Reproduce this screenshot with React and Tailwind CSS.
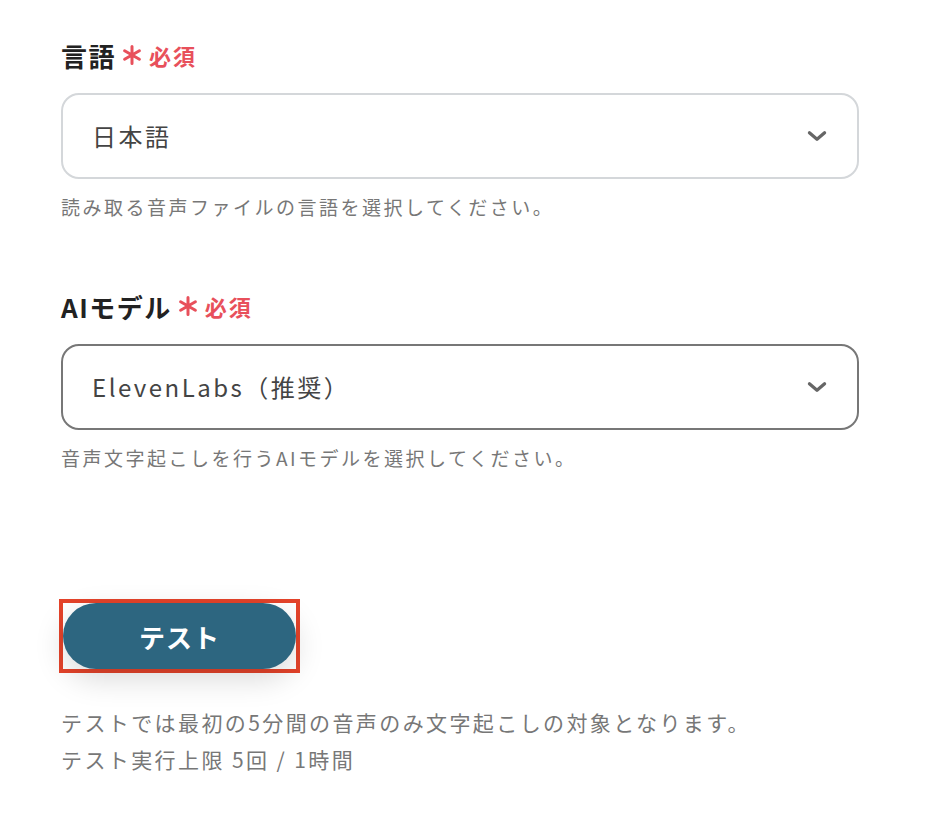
import React from "react";

function Chevron() {
  return (
    <svg width="26" height="26" viewBox="0 0 24 24" fill="none" stroke="#666" strokeWidth="3" strokeLinecap="round" strokeLinejoin="round">
      <path d="M5 9l7 6 7-6" />
    </svg>
  );
}

function Star() {
  return (
    <svg width="20" height="20" viewBox="0 0 20 20" stroke="#e8505b" strokeWidth="3" strokeLinecap="round">
      <path d="M10 1.5v17M2.6 5.75l14.8 8.5M17.4 5.75l-14.8 8.5" />
    </svg>
  );
}

function Field({ label, value, help, dark }) {
  return (
    <div className="flex flex-col">
      <div className="flex items-center h-[36px]">
        <span className="text-[26px] font-bold text-[#222] tracking-[1.5px]">{label}</span>
        <span className="ml-[6px] mr-[7px] flex items-center"><Star /></span>
        <span className="text-[22px] font-bold text-[#e8505b] tracking-[2px]">必須</span>
      </div>
      <div
        className={`mt-[20px] h-[86px] rounded-[18px] border-2 ${dark ? "border-[#777]" : "border-[#d4d7da]"} bg-white flex items-center justify-between pl-[29px] pr-[27px]`}
      >
        <span className="text-[24px] text-[#444] tracking-[2.5px]">{value}</span>
        <Chevron />
      </div>
      <div className="mt-[14px] text-[19px] leading-[28px] text-[#777] tracking-[2.5px]">{help}</div>
    </div>
  );
}

export default function App() {
  return (
    <div
      className="w-[934px] h-[838px] bg-white pl-[61px] pr-[75px] pt-[37px]"
      style={{ fontFamily: '"Noto Sans CJK JP", "Noto Sans", sans-serif' }}
    >
      <Field label="言語" value="日本語" help="読み取る音声ファイルの言語を選択してください。" />
      <div className="h-[67px]" />
      <Field dark label="AIモデル" value="ElevenLabs（推奨）" help="音声文字起こしを行うAIモデルを選択してください。" />
      <div className="mt-[127px] -ml-[2px] w-[241px] h-[74px] border-[4px] border-[#e4432a] flex items-center">
        <button className="w-full h-[66px] rounded-full bg-[#2d6680] text-white text-[26px] font-bold tracking-[1px] shadow-[0_10px_30px_rgba(0,0,0,0.15)]">
          テスト
        </button>
      </div>
      <div className="mt-[31px] text-[21px] text-[#777] leading-[37px] tracking-[2.4px]">
        <div>テストでは最初の5分間の音声のみ文字起こしの対象となります。</div>
        <div>テスト実行上限 5回 / 1時間</div>
      </div>
    </div>
  );
}
